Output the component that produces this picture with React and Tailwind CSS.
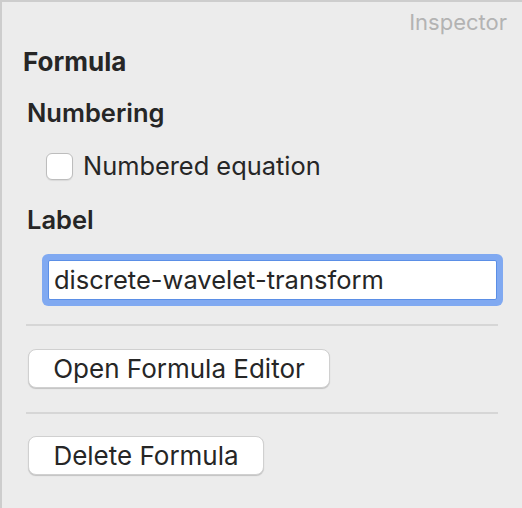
export default function App() {
  return (
    <div
      className="w-[522px] h-[508px] bg-[#ececec] border-t-2 border-l-2 border-[#cdcdcd] text-[#262626] overflow-hidden"
      style={{ fontFamily: 'Inter, "Noto Sans", sans-serif' }}
    >
      <div className="h-[40px] flex items-center justify-end pr-[15px] text-[22px] text-[#b3b3b3]">
        Inspector
      </div>
      <div className="h-[38px] flex items-center pl-[21px] text-[26px] font-bold">
        Formula
      </div>
      <div className="mt-[14px] h-[39px] flex items-center pl-[25px] text-[25.5px] font-semibold">
        Numbering
      </div>
      <div className="mt-[14px] h-[39px] flex items-center pl-[44px] gap-[10px] text-[25.4px]">
        <div className="w-[27px] h-[27px] rounded-[6px] bg-white border border-[#bdbdbd] shadow-[0_1px_1px_rgba(0,0,0,0.08)]" />
        <span>Numbered equation</span>
      </div>
      <div className="mt-[15px] h-[38px] flex items-center pl-[25px] text-[25.5px] font-semibold">
        Label
      </div>
      <div className="mt-[21px] ml-[46px] w-[449px] h-[40px] bg-white border border-[#5b8fe6] rounded-[2px] shadow-[0_0_0_6px_#80a9f1] flex items-center pl-[5px] text-[25.5px]">
        discrete-wavelet-transform
      </div>
      <div className="mt-[24px] ml-[24px] w-[472px] h-[2px] bg-[#d6d6d6]" />
      <div className="mt-[23px] ml-[26px] w-[302px] h-[39px] bg-white rounded-[8px] border border-[#d0d0d0] shadow-[0_1px_1px_rgba(0,0,0,0.18)] flex items-center justify-center text-[26px]">
        Open Formula Editor
      </div>
      <div className="mt-[24px] ml-[24px] w-[472px] h-[2px] bg-[#d6d6d6]" />
      <div className="mt-[22px] ml-[26px] w-[236px] h-[39px] bg-white rounded-[8px] border border-[#d0d0d0] shadow-[0_1px_1px_rgba(0,0,0,0.18)] flex items-center justify-center text-[26px]">
        Delete Formula
      </div>
    </div>
  );
}
